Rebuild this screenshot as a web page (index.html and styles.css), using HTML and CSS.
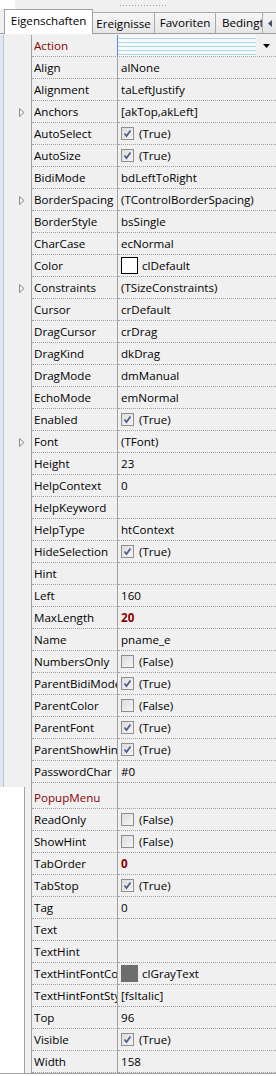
FILE: index.html
```html
<!DOCTYPE html>
<html>
<head>
<meta charset="utf-8">
<link rel="stylesheet" href="styles.css">
</head>
<body>
<div class="top"><div class="topwhite"></div><div class="griparea"><div class="grip"></div></div></div>
<div class="tabs">
  <div class="tab active">Eigenschaften</div>
  <div class="tab t2">Ereignisse</div>
  <div class="tab t3">Favoriten</div>
  <div class="tab t4">Bedingt</div>
  <div class="scrollbtn"><svg width="5" height="7" viewBox="0 0 5 7"><path d="M4 0 L0 3.5 L4 7 Z" fill="#3e4f6d"/></svg></div>
</div>
<div class="sec seca">
  <div class="side"></div>
  <div class="rows">
    <div class="row"><div class="gut"></div><div class="name red">Action</div><div class="val editor"><span class="drop"><svg width="7" height="4" viewBox="0 0 7 4"><path d="M0 0 H7 L3.5 4 Z" fill="#000"/></svg></span></div></div>
    <div class="row"><div class="gut"></div><div class="name">Align</div><div class="val">alNone</div></div>
    <div class="row"><div class="gut"></div><div class="name">Alignment</div><div class="val">taLeftJustify</div></div>
    <div class="row"><div class="gut"><svg class="tri" width="6" height="9" viewBox="0 0 6 9"><path d="M0.5 0.5 L5 4.5 L0.5 8.5 Z" fill="none" stroke="#8d8d8d"/></svg></div><div class="name">Anchors</div><div class="val">[akTop,akLeft]</div></div>
    <div class="row"><div class="gut"></div><div class="name">AutoSelect</div><div class="val"><span class="cb on"><svg width="11" height="11" viewBox="0 0 11 11"><path d="M2.5 5.5 L4.5 8 L8.5 2.5" fill="none" stroke="#4a5b8c" stroke-width="1.7"/></svg></span>(True)</div></div>
    <div class="row"><div class="gut"></div><div class="name">AutoSize</div><div class="val"><span class="cb on"><svg width="11" height="11" viewBox="0 0 11 11"><path d="M2.5 5.5 L4.5 8 L8.5 2.5" fill="none" stroke="#4a5b8c" stroke-width="1.7"/></svg></span>(True)</div></div>
    <div class="row"><div class="gut"></div><div class="name">BidiMode</div><div class="val">bdLeftToRight</div></div>
    <div class="row"><div class="gut"><svg class="tri" width="6" height="9" viewBox="0 0 6 9"><path d="M0.5 0.5 L5 4.5 L0.5 8.5 Z" fill="none" stroke="#8d8d8d"/></svg></div><div class="name">BorderSpacing</div><div class="val">(TControlBorderSpacing)</div></div>
    <div class="row"><div class="gut"></div><div class="name">BorderStyle</div><div class="val">bsSingle</div></div>
    <div class="row"><div class="gut"></div><div class="name">CharCase</div><div class="val">ecNormal</div></div>
    <div class="row"><div class="gut"></div><div class="name">Color</div><div class="val"><span class="sw white"></span>clDefault</div></div>
    <div class="row"><div class="gut"><svg class="tri" width="6" height="9" viewBox="0 0 6 9"><path d="M0.5 0.5 L5 4.5 L0.5 8.5 Z" fill="none" stroke="#8d8d8d"/></svg></div><div class="name">Constraints</div><div class="val">(TSizeConstraints)</div></div>
    <div class="row"><div class="gut"></div><div class="name">Cursor</div><div class="val">crDefault</div></div>
    <div class="row"><div class="gut"></div><div class="name">DragCursor</div><div class="val">crDrag</div></div>
    <div class="row"><div class="gut"></div><div class="name">DragKind</div><div class="val">dkDrag</div></div>
    <div class="row"><div class="gut"></div><div class="name">DragMode</div><div class="val">dmManual</div></div>
    <div class="row"><div class="gut"></div><div class="name">EchoMode</div><div class="val">emNormal</div></div>
    <div class="row"><div class="gut"></div><div class="name">Enabled</div><div class="val"><span class="cb on"><svg width="11" height="11" viewBox="0 0 11 11"><path d="M2.5 5.5 L4.5 8 L8.5 2.5" fill="none" stroke="#4a5b8c" stroke-width="1.7"/></svg></span>(True)</div></div>
    <div class="row"><div class="gut"><svg class="tri" width="6" height="9" viewBox="0 0 6 9"><path d="M0.5 0.5 L5 4.5 L0.5 8.5 Z" fill="none" stroke="#8d8d8d"/></svg></div><div class="name">Font</div><div class="val">(TFont)</div></div>
    <div class="row"><div class="gut"></div><div class="name">Height</div><div class="val">23</div></div>
    <div class="row"><div class="gut"></div><div class="name">HelpContext</div><div class="val">0</div></div>
    <div class="row"><div class="gut"></div><div class="name">HelpKeyword</div><div class="val"></div></div>
    <div class="row"><div class="gut"></div><div class="name">HelpType</div><div class="val">htContext</div></div>
    <div class="row"><div class="gut"></div><div class="name">HideSelection</div><div class="val"><span class="cb on"><svg width="11" height="11" viewBox="0 0 11 11"><path d="M2.5 5.5 L4.5 8 L8.5 2.5" fill="none" stroke="#4a5b8c" stroke-width="1.7"/></svg></span>(True)</div></div>
    <div class="row"><div class="gut"></div><div class="name">Hint</div><div class="val"></div></div>
    <div class="row"><div class="gut"></div><div class="name">Left</div><div class="val">160</div></div>
    <div class="row"><div class="gut"></div><div class="name">MaxLength</div><div class="val bold">20</div></div>
    <div class="row"><div class="gut"></div><div class="name">Name</div><div class="val">pname_e</div></div>
    <div class="row"><div class="gut"></div><div class="name">NumbersOnly</div><div class="val"><span class="cb"></span>(False)</div></div>
    <div class="row"><div class="gut"></div><div class="name">ParentBidiMode</div><div class="val"><span class="cb on"><svg width="11" height="11" viewBox="0 0 11 11"><path d="M2.5 5.5 L4.5 8 L8.5 2.5" fill="none" stroke="#4a5b8c" stroke-width="1.7"/></svg></span>(True)</div></div>
    <div class="row"><div class="gut"></div><div class="name">ParentColor</div><div class="val"><span class="cb"></span>(False)</div></div>
    <div class="row"><div class="gut"></div><div class="name">ParentFont</div><div class="val"><span class="cb on"><svg width="11" height="11" viewBox="0 0 11 11"><path d="M2.5 5.5 L4.5 8 L8.5 2.5" fill="none" stroke="#4a5b8c" stroke-width="1.7"/></svg></span>(True)</div></div>
    <div class="row"><div class="gut"></div><div class="name">ParentShowHint</div><div class="val"><span class="cb on"><svg width="11" height="11" viewBox="0 0 11 11"><path d="M2.5 5.5 L4.5 8 L8.5 2.5" fill="none" stroke="#4a5b8c" stroke-width="1.7"/></svg></span>(True)</div></div>
    <div class="row"><div class="gut"></div><div class="name">PasswordChar</div><div class="val">#0</div></div>
    <div class="filler"><div class="gut"></div><div class="name"></div><div class="val"></div></div>
  </div>
</div>
<div class="sec secb">
  <div class="side"></div>
  <div class="rows">
    <div class="row"><div class="gut"></div><div class="name red">PopupMenu</div><div class="val"></div></div>
    <div class="row"><div class="gut"></div><div class="name">ReadOnly</div><div class="val"><span class="cb"></span>(False)</div></div>
    <div class="row"><div class="gut"></div><div class="name">ShowHint</div><div class="val"><span class="cb"></span>(False)</div></div>
    <div class="row"><div class="gut"></div><div class="name">TabOrder</div><div class="val bold">0</div></div>
    <div class="row"><div class="gut"></div><div class="name">TabStop</div><div class="val"><span class="cb on"><svg width="11" height="11" viewBox="0 0 11 11"><path d="M2.5 5.5 L4.5 8 L8.5 2.5" fill="none" stroke="#4a5b8c" stroke-width="1.7"/></svg></span>(True)</div></div>
    <div class="row"><div class="gut"></div><div class="name">Tag</div><div class="val">0</div></div>
    <div class="row"><div class="gut"></div><div class="name">Text</div><div class="val"></div></div>
    <div class="row"><div class="gut"></div><div class="name">TextHint</div><div class="val"></div></div>
    <div class="row"><div class="gut"></div><div class="name">TextHintFontColor</div><div class="val"><span class="sw gray"></span>clGrayText</div></div>
    <div class="row"><div class="gut"></div><div class="name">TextHintFontStyle</div><div class="val">[fsItalic]</div></div>
    <div class="row"><div class="gut"></div><div class="name">Top</div><div class="val">96</div></div>
    <div class="row"><div class="gut"></div><div class="name">Visible</div><div class="val"><span class="cb on"><svg width="11" height="11" viewBox="0 0 11 11"><path d="M2.5 5.5 L4.5 8 L8.5 2.5" fill="none" stroke="#4a5b8c" stroke-width="1.7"/></svg></span>(True)</div></div>
    <div class="row"><div class="gut"></div><div class="name">Width</div><div class="val">158</div></div>
  </div>
</div>
</body>
</html>
```

FILE: styles.css
```css
html, body {
  margin: 0;
  padding: 0;
}
body {
  width: 276px;
  height: 1076px;
  overflow: hidden;
  background: #ffffff;
  font-family: "Open Sans", "Liberation Sans", sans-serif;
  font-size: 11.6px;
  color: #000;
}
.top {
  display: flex;
  height: 9px;
  background: #f0f0f0;
}
.topwhite {
  width: 15px;
  background: #ffffff;
}
.griparea {
  flex: 1;
  padding-top: 5px;
  padding-left: 105px;
}
.grip {
  width: 46px;
  height: 1px;
  background: linear-gradient(to right, #9c9c9c 1px, transparent 1px);
  background-size: 3px 1px;
}
.tabs {
  display: flex;
  align-items: flex-end;
  height: 24px;
  padding-left: 4px;
  background: #f0f0f0;
  border-bottom: 1px solid #a0a0a0;
}
.tab {
  box-sizing: border-box;
  height: 21px;
  line-height: 20px;
  text-align: center;
  white-space: nowrap;
  overflow: hidden;
  border-top: 1px solid #a9a9a9;
  border-right: 1px solid #a9a9a9;
  background: linear-gradient(#f6f6f6, #e6e6e6);
  color: #000;
}
.tab.active {
  height: 25px;
  width: 89px;
  margin-bottom: -1px;
  line-height: 22px;
  background: #ffffff;
  border-left: 1px solid #a0a0a0;
  border-right: 1px solid #a0a0a0;
  border-top: 1px solid #a0a0a0;
}
.t2 { width: 62px; line-height: 21px; }
.t3 { width: 61px; }
.t4 { width: 46px; text-align: left; padding-left: 6px; border-right: none; }
.scrollbtn {
  box-sizing: border-box;
  width: 14px;
  height: 21px;
  border: 1px solid #a9a9a9;
  border-bottom: none;
  border-right: none;
  background: linear-gradient(#f4f4f4, #e4e4e4);
  display: flex;
  align-items: center;
  justify-content: flex-end;
  padding-right: 3px;
}
.scrollbtn svg { display: block; }
.sec {
  display: flex;
  background: #f0f0f0;
}
.seca {
  padding-top: 1px;
}
.seca .side {
  width: 4px;
  background: #dfe7f1;
  border-right: 1px solid #b7c4d4;
  box-sizing: border-box;
}
.secb .side {
  width: 25px;
  background: #ffffff;
  border-right: 1px solid #a0a0a0;
  box-sizing: border-box;
}
.secb {
  border-bottom: 1px solid #a0a0a0;
}
.rows {
  flex: 1;
  min-width: 0;
}
.row, .filler {
  display: flex;
  height: 22px;
}
.filler { height: 4px; }
.gut {
  box-sizing: border-box;
  width: 28px;
  border-right: 1px solid #a0a0a0;
  display: flex;
  align-items: center;
  padding-left: 15px;
}
.secb .gut { width: 7px; padding-left: 0; }
.tri { display: block; }
.name {
  box-sizing: border-box;
  width: 86px;
  flex: none;
  padding-left: 2px;
  line-height: 21px;
  white-space: nowrap;
  overflow: hidden;
  border-right: 1px solid #a0a0a0;
  border-bottom: 1px dotted #a0a0a0;
}
.val {
  flex: 1;
  min-width: 0;
  padding-left: 3px;
  line-height: 21px;
  white-space: nowrap;
  overflow: hidden;
  display: flex;
  align-items: center;
  border-bottom: 1px dotted #a0a0a0;
}
.filler .name, .filler .val { border-bottom: none; }
.red { color: #8b0000; }
.bold { color: #8b0000; font-weight: bold; }
.editor {
  padding-left: 0;
  border-left: 1px solid #5b8fd0;
  margin-left: -1px;
  background:
    repeating-linear-gradient(#f7f9fb 0px, #f7f9fb 3px, #a9d7f0 3px, #a9d7f0 4px);
  background-size: 138px 100%;
  background-repeat: no-repeat;
  background-color: #f7f7f7;
  justify-content: flex-end;
}
.drop {
  width: 20px;
  display: flex;
  justify-content: center;
  align-items: center;
  background: #f0f0f0;
  align-self: stretch;
}
.drop svg { display: block; }
.cb {
  box-sizing: border-box;
  width: 13px;
  height: 13px;
  border: 1px solid #8e8f8f;
  background: linear-gradient(135deg, #dcdcdc, #f6f6f6);
  margin-right: 5px;
  display: flex;
  align-items: center;
  justify-content: center;
  flex: none;
}
.cb svg { display: block; }
.sw {
  box-sizing: border-box;
  width: 17px;
  height: 17px;
  margin-right: 4px;
  flex: none;
}
.sw.white { background: #fff; border: 1px solid #000; }
.sw.gray { background: #6d6d6d; }
```
